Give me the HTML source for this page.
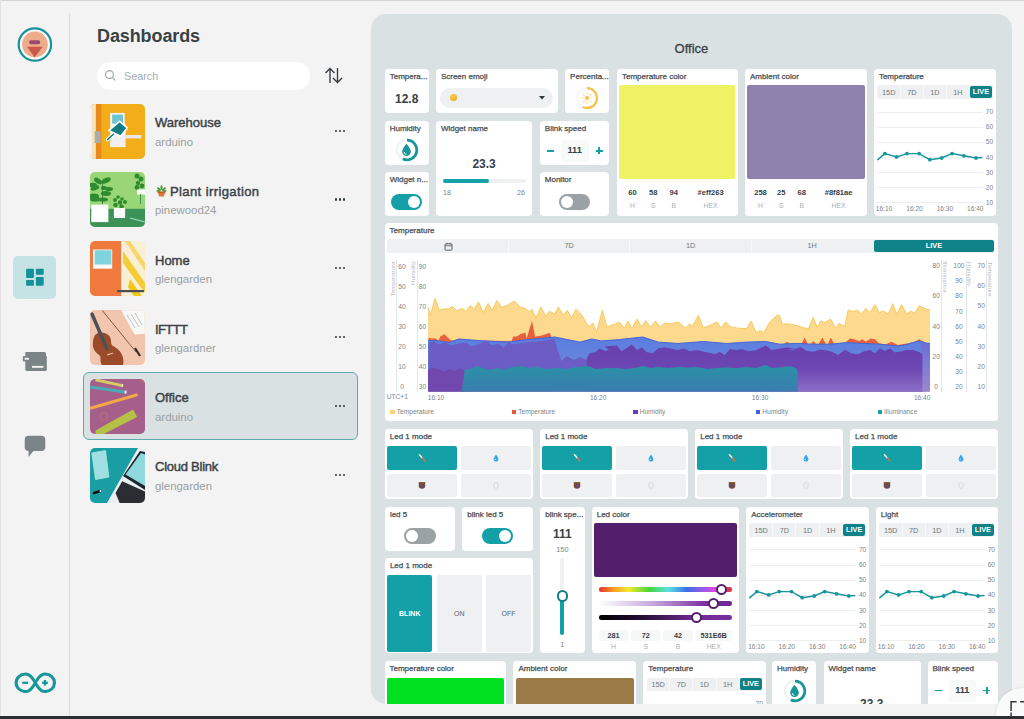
<!DOCTYPE html><html><head><meta charset="utf-8"><style>
*{margin:0;padding:0;box-sizing:border-box}
html,body{width:1024px;height:719px;overflow:hidden;background:#f3f3f3;font-family:"Liberation Sans",sans-serif;color:#374146}
.a{position:absolute}
.card{position:absolute;background:#fff;border-radius:4px;overflow:hidden}
.ttl{position:absolute;left:5px;top:4px;font-size:8px;color:#474d51;white-space:nowrap;-webkit-text-stroke:0.25px #474d51}
.tab{position:absolute;font-size:7.5px;color:#6b7679;text-align:center}
</style></head><body>
<div class="a" style="left:0;top:0;width:1024px;height:1px;background:#d6d6d6"></div>
<div class="a" style="left:0;top:0;width:1px;height:716px;background:#e2e2e2"></div>
<div class="a" style="left:69px;top:13px;width:1px;height:703px;background:#dcdcdc"></div>
<svg class="a" style="left:17px;top:27px" width="36" height="36" viewBox="17 27 36 36">
<circle cx="34.9" cy="44.5" r="16.2" fill="#fbfdfd" stroke="#17909a" stroke-width="2.2"/>
<circle cx="34.9" cy="44.5" r="12.9" fill="#eeac8a"/>
<rect x="29.1" y="40.2" width="11.1" height="4.1" rx="2" fill="#9a4a6e"/>
<path d="M27 46.8 L42.7 46.8 L34.7 57.5 Z" fill="#c95a4a"/>
</svg>
<div class="a" style="left:13.4px;top:256px;width:42.6px;height:43.2px;border-radius:5px;background:#c5e2e4"></div>
<svg class="a" style="left:0;top:250px" width="70" height="50" viewBox="0 250 70 50" fill="#12919a">
<rect x="26.1" y="268.8" width="7.8" height="9.2" rx="0.8"/><rect x="35.9" y="268.8" width="7.8" height="5.9" rx="0.8"/>
<rect x="26.1" y="280" width="7.8" height="5.8" rx="0.8"/><rect x="35.9" y="276.9" width="7.8" height="8.9" rx="0.8"/></svg>
<svg class="a" style="left:0;top:340px" width="70" height="40" viewBox="0 340 70 40">
<path d="M26.5 352 H44.5 A1.5 1.5 0 0 1 46 353.5 V356 H46.8 V369.5 A1.5 1.5 0 0 1 45.3 371 H26.8 A1.5 1.5 0 0 1 25.3 369.5 V352 Z" fill="#7b8588"/>
<rect x="22.8" y="356.1" width="6.6" height="5.3" rx="1" fill="#7b8588"/>
<rect x="24.7" y="357.8" width="4.2" height="1.9" fill="#f3f3f3"/>
<rect x="32" y="365.9" width="11.4" height="1.9" fill="#f3f3f3"/></svg>
<svg class="a" style="left:0;top:430px" width="70" height="32" viewBox="0 430 70 32">
<path d="M28.7 435.8 H41.3 A4 4 0 0 1 45.3 439.8 V447.1 A4 4 0 0 1 41.3 451.1 H33.4 L28.6 457 V451.1 A4 4 0 0 1 24.7 447.1 V439.8 A4 4 0 0 1 28.7 435.8 Z" fill="#7b8588"/></svg>
<svg class="a" style="left:13.7px;top:671.6px" width="42.6" height="21.6" viewBox="0 0 44 23" preserveAspectRatio="none">
<g fill="none" stroke="#17979b" stroke-width="3.2">
<path d="M12 2.2 C6.5 2.2 2.2 6.3 2.2 11.5 C2.2 16.7 6.5 20.8 12 20.8 C17.5 20.8 20 15 22 11.5 C24 8 26.5 2.2 32 2.2 C37.5 2.2 41.8 6.3 41.8 11.5 C41.8 16.7 37.5 20.8 32 20.8 C26.5 20.8 24 15 22 11.5 C20 8 17.5 2.2 12 2.2 Z"/>
</g>
<rect x="8.5" y="10.3" width="6" height="2.4" fill="#17979b"/>
<rect x="29" y="10.3" width="6" height="2.4" fill="#17979b"/><rect x="30.8" y="8.5" width="2.4" height="6" fill="#17979b"/>
</svg>
<div class="a" style="left:97px;top:26px;font-size:18px;font-weight:bold;color:#394145;letter-spacing:-0.1px">Dashboards</div>
<div class="a" style="left:97px;top:62.2px;width:212.5px;height:27.6px;border-radius:13.8px;background:#fff"></div>
<svg class="a" style="left:104px;top:69px" width="13" height="13" viewBox="0 0 13 13"><circle cx="5.5" cy="5.5" r="3.9" fill="none" stroke="#9aa3a6" stroke-width="1.1"/><path d="M8.4 8.4 L11.3 11.3" stroke="#9aa3a6" stroke-width="1.2"/></svg>
<div class="a" style="left:124px;top:70px;font-size:10.8px;color:#a6aeb1">Search</div>
<svg class="a" style="left:323px;top:66px" width="21" height="19" viewBox="0 0 21 19" fill="none" stroke="#333c40" stroke-width="1.35">
<path d="M7 17 V2.5 M2.5 7 L7 2.5 L11.5 7"/><path d="M14.5 2 V16.5 M10 12 L14.5 16.5 L19 12"/></svg>
<div class="a thumb0" style="left:90px;top:103.6px;width:55px;height:55px;border-radius:5px;overflow:hidden"><svg width="55" height="55" viewBox="0 0 55 55"><rect width="55" height="55" fill="#f2ad18"/>
<rect x="0" y="0" width="2" height="55" fill="#f3f3f3"/><rect x="1.8" y="0" width="4.2" height="55" fill="#f4e3b8"/><rect x="5.9" y="0" width="5.5" height="55" fill="#e98a1c"/>
<rect x="20.1" y="8.9" width="14.6" height="11.7" fill="#f2f4f4"/><rect x="22.2" y="10.6" width="10.8" height="9.2" fill="#6cc5d0"/>
<rect x="20.1" y="19.8" width="15.5" height="23.3" fill="#f0f0ee"/><rect x="34.7" y="31" width="16.7" height="3.4" fill="#e8e8e6"/>
<rect x="4.7" y="27.3" width="5.8" height="11.7" fill="#a9adad"/>
<path d="M17.6 35.6 L24 29.5" stroke="#fff" stroke-width="3.5" stroke-linecap="round"/>
<path d="M17.6 35.6 L24 29.5" stroke="#0f7d82" stroke-width="1.5" stroke-linecap="round"/>
<path d="M18.9 26.4 L29.7 17.3 L37.2 23.9 L30.6 32.3 Z" fill="#0f7d82" stroke="#fff" stroke-width="1.6" stroke-linejoin="round"/></svg></div>
<div class="a" style="left:155px;top:115.1px;font-size:13px;letter-spacing:0px;color:#3b4347;-webkit-text-stroke:0.45px #3b4347">Warehouse</div>
<div class="a" style="left:155px;top:135.6px;font-size:11.4px;color:#999fa2">arduino</div>
<div class="a" style="left:335px;top:129.5px;width:13px;height:3px"><i class="a" style="left:0.0px;top:0;width:2.2px;height:2.4px;border-radius:50%;background:#2f3a3f"></i><i class="a" style="left:4.1px;top:0;width:2.2px;height:2.4px;border-radius:50%;background:#2f3a3f"></i><i class="a" style="left:8.2px;top:0;width:2.2px;height:2.4px;border-radius:50%;background:#2f3a3f"></i></div>
<div class="a thumb1" style="left:90px;top:172.4px;width:55px;height:55px;border-radius:5px;overflow:hidden"><svg width="55" height="55" viewBox="0 0 55 55"><rect width="55" height="55" fill="#98d677"/><rect x="0" y="36.8" width="55" height="18.2" fill="#3d9257"/>
<g fill="#2e8b2e"><ellipse cx="8" cy="9" rx="4.5" ry="2.4" transform="rotate(35 8 9)"/><ellipse cx="16" cy="8.5" rx="5" ry="2.4" transform="rotate(-25 16 8.5)"/><ellipse cx="3" cy="13" rx="4" ry="2.2"/>
<ellipse cx="5" cy="16" rx="4.5" ry="2.2" transform="rotate(-20 5 16)"/><ellipse cx="14" cy="16" rx="3" ry="2"/><ellipse cx="19" cy="17" rx="4" ry="2"/>
<ellipse cx="16" cy="21.5" rx="5" ry="2.5"/><ellipse cx="4" cy="24" rx="5" ry="2.6"/><ellipse cx="5" cy="27" rx="5" ry="2.6"/><ellipse cx="13" cy="27.5" rx="5" ry="2"/>
<circle cx="25" cy="28" r="2"/><circle cx="28" cy="25" r="1.8"/><circle cx="32" cy="27" r="1.8"/><circle cx="30" cy="30.5" r="2.2"/><circle cx="35" cy="30" r="2"/><circle cx="25.5" cy="33" r="2.3"/><circle cx="31.5" cy="34.5" r="2.2"/>
<circle cx="47" cy="4" r="2.5"/><circle cx="51" cy="7" r="2.5"/><circle cx="48" cy="11" r="2.2"/><circle cx="52" cy="14" r="2.4"/><circle cx="47" cy="15.5" r="2.4"/></g>
<rect x="12" y="10" width="0.8" height="22" fill="#2e7a2e"/>
<rect x="1.3" y="32.6" width="17.1" height="17.5" fill="#fff"/><rect x="23.9" y="36" width="11.2" height="10" fill="#f8f8f8"/>
<rect x="47" y="17.5" width="8" height="5" fill="#fff"/><rect x="50" y="22" width="1" height="10" fill="#3d9257"/>
<path d="M40 46 L55 50" stroke="#9fe0d0" stroke-width="1.2"/></svg></div>
<svg class="a" style="left:155.5px;top:184.9px" width="11" height="12" viewBox="0 0 11 12"><g fill="#4a9a3a"><ellipse cx="3" cy="4" rx="2.4" ry="1.1" transform="rotate(40 3 4)"/><ellipse cx="8" cy="4" rx="2.4" ry="1.1" transform="rotate(-40 8 4)"/><ellipse cx="5.5" cy="2.6" rx="1.1" ry="2.3"/><ellipse cx="2.5" cy="6" rx="2.2" ry="1"/><ellipse cx="8.5" cy="6" rx="2.2" ry="1"/></g><path d="M2 7 H9 L8 11.5 H3 Z" fill="#e07a3a"/><rect x="1.6" y="6.6" width="7.8" height="1.6" rx="0.5" fill="#c8602a"/></svg>
<div class="a" style="left:170px;top:183.9px;font-size:13px;letter-spacing:0.4px;color:#3b4347;-webkit-text-stroke:0.45px #3b4347">Plant irrigation</div>
<div class="a" style="left:155px;top:204.4px;font-size:11.4px;color:#999fa2">pinewood24</div>
<div class="a" style="left:335px;top:198.3px;width:13px;height:3px"><i class="a" style="left:0.0px;top:0;width:2.2px;height:2.4px;border-radius:50%;background:#2f3a3f"></i><i class="a" style="left:4.1px;top:0;width:2.2px;height:2.4px;border-radius:50%;background:#2f3a3f"></i><i class="a" style="left:8.2px;top:0;width:2.2px;height:2.4px;border-radius:50%;background:#2f3a3f"></i></div>
<div class="a thumb2" style="left:90px;top:241.2px;width:55px;height:55px;border-radius:5px;overflow:hidden"><svg width="55" height="55" viewBox="0 0 55 55"><rect width="55" height="55" fill="#f8efd4"/><rect x="0" y="0" width="31.4" height="55" fill="#f07a3e"/>
<path d="M35 0 L40 0 L55 22 L55 30 Z" fill="#f5d050" opacity="0.8"/><path d="M33 10 L55 42 L55 52 L33 22 Z" fill="#f5c518" opacity="0.85"/><path d="M40 38 L52 55 L44 55 L38 46 Z" fill="#f5c518"/>
<rect x="31.4" y="0" width="1.5" height="55" fill="#f6f1e6"/>
<rect x="3" y="8.5" width="19.2" height="19.2" fill="#f8f8f6"/><rect x="4.7" y="9.3" width="16.7" height="14.2" fill="#7fd3dc"/>
<rect x="27.2" y="49" width="26.7" height="2.2" fill="#4a4f55"/></svg></div>
<div class="a" style="left:155px;top:252.7px;font-size:13px;letter-spacing:0px;color:#3b4347;-webkit-text-stroke:0.45px #3b4347">Home</div>
<div class="a" style="left:155px;top:273.2px;font-size:11.4px;color:#999fa2">glengarden</div>
<div class="a" style="left:335px;top:267.1px;width:13px;height:3px"><i class="a" style="left:0.0px;top:0;width:2.2px;height:2.4px;border-radius:50%;background:#2f3a3f"></i><i class="a" style="left:4.1px;top:0;width:2.2px;height:2.4px;border-radius:50%;background:#2f3a3f"></i><i class="a" style="left:8.2px;top:0;width:2.2px;height:2.4px;border-radius:50%;background:#2f3a3f"></i></div>
<div class="a thumb3" style="left:90px;top:310.0px;width:55px;height:55px;border-radius:5px;overflow:hidden"><svg width="55" height="55" viewBox="0 0 55 55"><rect width="55" height="55" fill="#f2c6ae"/>
<path d="M31.4 0.3 L54.8 0.3 L54.8 23.7 L44.7 24.5 L33 3.7 Z" fill="#f8f8f6"/>
<g stroke="#9aa0a0" stroke-width="0.6"><path d="M37 5 L45 18 M41 4 L49 17 M45 3 L52 15"/></g>
<path d="M5 25 C9 21 17 22 20 27 C22 31 20 34 23 36 C27 38 32 42 33 48 C34 52 33 55 33 55 L12 55 C9 51 12 47 9 45 C5 42 2 38 3 32 C3 29 4 27 5 25 Z" fill="#9b4a2a"/>
<path d="M2 4 L17 39" stroke="#4a5258" stroke-width="3.5" stroke-linecap="round"/>
<path d="M12.2 0.3 L46 42" stroke="#7a4a35" stroke-width="0.9"/><path d="M45 38 L50 46" stroke="#3a2a20" stroke-width="2.2"/>
<path d="M17 45 L23 43" stroke="#e9c9a0" stroke-width="1.2"/></svg></div>
<div class="a" style="left:155px;top:321.5px;font-size:13px;letter-spacing:-0.6px;color:#3b4347;-webkit-text-stroke:0.45px #3b4347">IFTTT</div>
<div class="a" style="left:155px;top:342.0px;font-size:11.4px;color:#999fa2">glengardner</div>
<div class="a" style="left:335px;top:335.9px;width:13px;height:3px"><i class="a" style="left:0.0px;top:0;width:2.2px;height:2.4px;border-radius:50%;background:#2f3a3f"></i><i class="a" style="left:4.1px;top:0;width:2.2px;height:2.4px;border-radius:50%;background:#2f3a3f"></i><i class="a" style="left:8.2px;top:0;width:2.2px;height:2.4px;border-radius:50%;background:#2f3a3f"></i></div>
<div class="a" style="left:82.5px;top:371.7px;width:275.5px;height:68px;border-radius:6px;background:#dae1e3;border:1.5px solid #5ea9ab"></div>
<div class="a thumb4" style="left:90px;top:378.8px;width:55px;height:55px;border-radius:5px;overflow:hidden"><svg width="55" height="55" viewBox="0 0 55 55"><rect width="55" height="55" fill="#a65e8a"/>
<path d="M5.5 0.8 L31.4 6.4" stroke="#d6cc66" stroke-width="3"/><path d="M31.4 6.4 L33 6.8" stroke="#f6f0d0" stroke-width="3"/>
<path d="M0 8 L34.7 13" stroke="#4aaab5" stroke-width="3"/><path d="M34.7 13 L36.5 13.2" stroke="#dff" stroke-width="3"/>
<path d="M1.3 29 L46.4 16" stroke="#f0a848" stroke-width="3" stroke-linecap="round"/>
<path d="M5.5 51.5 L43.1 30.6 L47.2 38.1 L13.9 55 L5.5 55 Z" fill="#b4c046"/>
<circle cx="13.9" cy="37.3" r="4" fill="none" stroke="#c58a5e" stroke-width="0.8" opacity="0.6"/>
<path d="M50 2 L55 5 L55 0 Z" fill="#c07a6a" opacity="0.6"/></svg></div>
<div class="a" style="left:155px;top:390.3px;font-size:13px;letter-spacing:0px;color:#3b4347;-webkit-text-stroke:0.45px #3b4347">Office</div>
<div class="a" style="left:155px;top:410.8px;font-size:11.4px;color:#999fa2">arduino</div>
<div class="a" style="left:335px;top:404.7px;width:13px;height:3px"><i class="a" style="left:0.0px;top:0;width:2.2px;height:2.4px;border-radius:50%;background:#2f3a3f"></i><i class="a" style="left:4.1px;top:0;width:2.2px;height:2.4px;border-radius:50%;background:#2f3a3f"></i><i class="a" style="left:8.2px;top:0;width:2.2px;height:2.4px;border-radius:50%;background:#2f3a3f"></i></div>
<div class="a thumb5" style="left:90px;top:447.6px;width:55px;height:55px;border-radius:5px;overflow:hidden"><svg width="55" height="55" viewBox="0 0 55 55"><rect width="55" height="55" fill="#e9eef0"/><path d="M0 0 L48 0 L17 55 L0 55 Z" fill="#1a9ea3"/>
<path d="M1.8 4.9 L15.5 2.4 L18.9 29.1 L5.5 31.6 Z" fill="#9fdfe2" stroke="#c8f0f0" stroke-width="0.6"/>
<path d="M33 28 L50 3 L55 4 L55 42 Z" fill="#1b2630"/><path d="M35.5 26.5 L51 5 L55 6.5 L55 38 Z" fill="#8fd8dc"/>
<path d="M25.5 45 L32.2 33.3 L55 43.6 L55 55 L29.7 55 Z" fill="#2a2e33"/>
<path d="M4 45 L10.5 43" stroke="#111" stroke-width="2.6" stroke-linecap="round"/><circle cx="10.5" cy="43" r="1" fill="#fff"/></svg></div>
<div class="a" style="left:155px;top:459.1px;font-size:13px;letter-spacing:-0.25px;color:#3b4347;-webkit-text-stroke:0.45px #3b4347">Cloud Blink</div>
<div class="a" style="left:155px;top:479.6px;font-size:11.4px;color:#999fa2">glengarden</div>
<div class="a" style="left:335px;top:473.5px;width:13px;height:3px"><i class="a" style="left:0.0px;top:0;width:2.2px;height:2.4px;border-radius:50%;background:#2f3a3f"></i><i class="a" style="left:4.1px;top:0;width:2.2px;height:2.4px;border-radius:50%;background:#2f3a3f"></i><i class="a" style="left:8.2px;top:0;width:2.2px;height:2.4px;border-radius:50%;background:#2f3a3f"></i></div>
<div class="a" id="panel" style="left:371px;top:14px;width:640.5px;height:689.5px;border-radius:15px;background:#dae1e3;overflow:hidden"><div class="a" style="left:290.4px;top:27.2px;width:60px;height:16px;line-height:16px;text-align:center;white-space:nowrap;font-size:13px;color:#3c4347;-webkit-text-stroke:0.3px #3c4347">Office</div>
<div class="card" style="left:13.7px;top:55.2px;width:44.1px;height:43.6px;border-radius:4px"><div class="ttl" style="left:5px;top:2.9px">Tempera...</div><div class="a" style="left:0.0px;top:22.5px;width:44px;height:14px;line-height:14px;text-align:center;white-space:nowrap;font-size:12px;font-weight:bold;color:#374146">12.8</div></div>
<div class="card" style="left:64.9px;top:55.2px;width:122.4px;height:43.6px;border-radius:4px"><div class="ttl" style="left:5px;top:2.9px">Screen emoji</div><div class="a" style="left:4.6px;top:18.6px;width:112.9px;height:20.3px;background:#eef0f1;border-radius:10px"><div class="a" style="left:9.5px;top:6.2px;width:7.4px;height:7.4px;background:radial-gradient(circle at 40% 35%,#f8d04a,#e8a020);border-radius:50%"></div><svg class="a" style="left:98.4px;top:8.6px" width="6" height="4"><path d="M0 0 H6 L3 3.6 Z" fill="#2f3a3e"/></svg></div></div>
<div class="card" style="left:194.1px;top:55.2px;width:44.1px;height:43.6px;border-radius:4px"><div class="ttl" style="left:5px;top:2.9px">Percenta...</div><svg class="a" style="left:10px;top:16.4px" width="24" height="24" viewBox="0 0 24 24">
<circle cx="12" cy="12" r="9.9" fill="none" stroke="#f3f4f5" stroke-width="1.6"/>
<path d="M12 2.1 A9.9 9.9 0 1 1 7.82 20.97" fill="none" stroke="#f5c244" stroke-width="2.3"/>
<circle cx="12" cy="12" r="2" fill="#f6bd48"/>
<g stroke="#f9dc9a" stroke-width="1.1" stroke-linecap="round"><path d="M12 6.6 V8.3 M12 15.7 V17.4 M6.6 12 H8.3 M15.7 12 H17.4 M8.2 8.2 L9.3 9.3 M14.7 14.7 L15.8 15.8 M8.2 15.8 L9.3 14.7 M14.7 9.3 L15.8 8.2"/></g></svg></div>
<div class="card" style="left:246.0px;top:55.0px;width:120.5px;height:146.9px;border-radius:4px"><div class="ttl" style="left:5px;top:2.9px">Temperature color</div><div class="a" style="left:2.2px;top:16.2px;width:116.1px;height:94.3px;background:#eff263;border-radius:2px"></div><div class="a" style="left:-4.5px;top:118.6px;width:40px;height:10px;line-height:10px;text-align:center;white-space:nowrap;font-size:7.6px;font-weight:bold;color:#374146">60</div><div class="a" style="left:0.5px;top:131.5px;width:30px;height:10px;line-height:10px;text-align:center;white-space:nowrap;font-size:6.8px;color:#a8b0b3">H</div><div class="a" style="left:16.2px;top:118.6px;width:40px;height:10px;line-height:10px;text-align:center;white-space:nowrap;font-size:7.6px;font-weight:bold;color:#374146">58</div><div class="a" style="left:21.2px;top:131.5px;width:30px;height:10px;line-height:10px;text-align:center;white-space:nowrap;font-size:6.8px;color:#a8b0b3">S</div><div class="a" style="left:36.8px;top:118.6px;width:40px;height:10px;line-height:10px;text-align:center;white-space:nowrap;font-size:7.6px;font-weight:bold;color:#374146">94</div><div class="a" style="left:41.8px;top:131.5px;width:30px;height:10px;line-height:10px;text-align:center;white-space:nowrap;font-size:6.8px;color:#a8b0b3">B</div><div class="a" style="left:73.6px;top:118.6px;width:40px;height:10px;line-height:10px;text-align:center;white-space:nowrap;font-size:7.6px;font-weight:bold;color:#374146">#eff263</div><div class="a" style="left:78.6px;top:131.5px;width:30px;height:10px;line-height:10px;text-align:center;white-space:nowrap;font-size:6.8px;color:#a8b0b3">HEX</div></div>
<div class="card" style="left:374.0px;top:55.0px;width:121.9px;height:146.9px;border-radius:4px"><div class="ttl" style="left:5px;top:2.9px">Ambient color</div><div class="a" style="left:2.2px;top:16.2px;width:117.5px;height:94.3px;background:#8f81ae;border-radius:2px"></div><div class="a" style="left:-4.5px;top:118.6px;width:40px;height:10px;line-height:10px;text-align:center;white-space:nowrap;font-size:7.6px;font-weight:bold;color:#374146">258</div><div class="a" style="left:0.5px;top:131.5px;width:30px;height:10px;line-height:10px;text-align:center;white-space:nowrap;font-size:6.8px;color:#a8b0b3">H</div><div class="a" style="left:16.2px;top:118.6px;width:40px;height:10px;line-height:10px;text-align:center;white-space:nowrap;font-size:7.6px;font-weight:bold;color:#374146">25</div><div class="a" style="left:21.2px;top:131.5px;width:30px;height:10px;line-height:10px;text-align:center;white-space:nowrap;font-size:6.8px;color:#a8b0b3">S</div><div class="a" style="left:36.8px;top:118.6px;width:40px;height:10px;line-height:10px;text-align:center;white-space:nowrap;font-size:7.6px;font-weight:bold;color:#374146">68</div><div class="a" style="left:41.8px;top:131.5px;width:30px;height:10px;line-height:10px;text-align:center;white-space:nowrap;font-size:6.8px;color:#a8b0b3">B</div><div class="a" style="left:73.6px;top:118.6px;width:40px;height:10px;line-height:10px;text-align:center;white-space:nowrap;font-size:7.6px;font-weight:bold;color:#374146">#8f81ae</div><div class="a" style="left:78.6px;top:131.5px;width:30px;height:10px;line-height:10px;text-align:center;white-space:nowrap;font-size:6.8px;color:#a8b0b3">HEX</div></div>
<div class="card" style="left:502.9px;top:54.8px;width:122.0px;height:147.1px;border-radius:4px"><div class="ttl" style="left:5px;top:2.9px">Temperature</div><div class="a" style="left:3.3px;top:16.6px;width:115.4px;height:13.3px;background:#eef0f1;border-radius:2px"></div><div class="a" style="left:3.3px;top:18.0px;width:23.080000000000002px;height:12.6px;line-height:12.6px;text-align:center;white-space:nowrap;font-size:7.3px;color:#6e797d">15D</div><div class="a" style="left:26.4px;top:18.0px;width:23.080000000000002px;height:12.6px;line-height:12.6px;text-align:center;white-space:nowrap;font-size:7.3px;color:#6e797d">7D</div><div class="a" style="left:25.9px;top:16.6px;width:1.0px;height:13.3px;background:#f8f9f9"></div><div class="a" style="left:49.5px;top:18.0px;width:23.080000000000002px;height:12.6px;line-height:12.6px;text-align:center;white-space:nowrap;font-size:7.3px;color:#6e797d">1D</div><div class="a" style="left:49.0px;top:16.6px;width:1.0px;height:13.3px;background:#f8f9f9"></div><div class="a" style="left:72.5px;top:18.0px;width:23.080000000000002px;height:12.6px;line-height:12.6px;text-align:center;white-space:nowrap;font-size:7.3px;color:#6e797d">1H</div><div class="a" style="left:72.0px;top:16.6px;width:1.0px;height:13.3px;background:#f8f9f9"></div><div class="a" style="left:95.9px;top:17.3px;width:22.4px;height:11.8px;background:#0e8286;border-radius:2px"><div class="a" style="left:0.0px;top:0.0px;width:22.4px;height:11.6px;line-height:11.6px;text-align:center;white-space:nowrap;font-size:7.3px;font-weight:bold;color:#fff">LIVE</div></div><div class="a" style="left:3.3px;top:42.8px;width:106.0px;height:0.8px;background:#eceeef"></div><div class="a" style="left:108.5px;top:38.3px;width:14px;height:9px;line-height:9px;text-align:center;white-space:nowrap;font-size:6.6px;color:#7b8589">70</div><div class="a" style="left:3.3px;top:57.9px;width:106.0px;height:0.8px;background:#eceeef"></div><div class="a" style="left:108.5px;top:53.4px;width:14px;height:9px;line-height:9px;text-align:center;white-space:nowrap;font-size:6.6px;color:#7b8589">60</div><div class="a" style="left:3.3px;top:73.1px;width:106.0px;height:0.8px;background:#eceeef"></div><div class="a" style="left:108.5px;top:68.6px;width:14px;height:9px;line-height:9px;text-align:center;white-space:nowrap;font-size:6.6px;color:#7b8589">50</div><div class="a" style="left:3.3px;top:88.2px;width:106.0px;height:0.8px;background:#eceeef"></div><div class="a" style="left:108.5px;top:83.8px;width:14px;height:9px;line-height:9px;text-align:center;white-space:nowrap;font-size:6.6px;color:#7b8589">40</div><div class="a" style="left:3.3px;top:103.4px;width:106.0px;height:0.8px;background:#eceeef"></div><div class="a" style="left:108.5px;top:98.9px;width:14px;height:9px;line-height:9px;text-align:center;white-space:nowrap;font-size:6.6px;color:#7b8589">30</div><div class="a" style="left:3.3px;top:118.5px;width:106.0px;height:0.8px;background:#eceeef"></div><div class="a" style="left:108.5px;top:114.0px;width:14px;height:9px;line-height:9px;text-align:center;white-space:nowrap;font-size:6.6px;color:#7b8589">20</div><div class="a" style="left:3.3px;top:133.7px;width:106.0px;height:0.8px;background:#eceeef"></div><div class="a" style="left:108.5px;top:129.2px;width:14px;height:9px;line-height:9px;text-align:center;white-space:nowrap;font-size:6.6px;color:#7b8589">10</div><div class="a" style="left:-1.8px;top:135.7px;width:24px;height:9px;line-height:9px;text-align:center;white-space:nowrap;font-size:6.6px;color:#7b8589">16:10</div><div class="a" style="left:28.6px;top:135.7px;width:24px;height:9px;line-height:9px;text-align:center;white-space:nowrap;font-size:6.6px;color:#7b8589">16:20</div><div class="a" style="left:59.0px;top:135.7px;width:24px;height:9px;line-height:9px;text-align:center;white-space:nowrap;font-size:6.6px;color:#7b8589">16:30</div><div class="a" style="left:89.4px;top:135.7px;width:24px;height:9px;line-height:9px;text-align:center;white-space:nowrap;font-size:6.6px;color:#7b8589">16:40</div><svg class="a" style="left:0;top:0" width="122.0" height="147.1"><path d="M3.3 91.1 L10.9 84.6 L22.6 87.9 L33.0 84.6 L45.1 84.6 L55.8 90.7 L67.7 89.0 L78.1 84.6 L89.9 86.8 L102.0 89.0 L108.5 88.5" fill="none" stroke="#17979b" stroke-width="1.4"/><g fill="#17979b"><circle cx="10.9" cy="84.6" r="1.9"/><circle cx="22.6" cy="87.9" r="1.9"/><circle cx="33.0" cy="84.6" r="1.9"/><circle cx="45.1" cy="84.6" r="1.9"/><circle cx="55.8" cy="90.7" r="1.9"/><circle cx="67.7" cy="89.0" r="1.9"/><circle cx="78.1" cy="84.6" r="1.9"/><circle cx="89.9" cy="86.8" r="1.9"/><circle cx="102.0" cy="89.0" r="1.9"/></g></svg></div>
<div class="card" style="left:13.7px;top:107.4px;width:44.1px;height:43.6px;border-radius:4px"><div class="ttl" style="left:5px;top:2.9px">Humidity</div><svg class="a" style="left:10.5px;top:16.5px" width="24" height="24" viewBox="0 0 24 24">
<circle cx="12" cy="12" r="10.2" fill="none" stroke="#f1f2f2" stroke-width="2"/>
<path d="M12 2.2 A9.8 9.8 0 1 1 7.86 20.88" fill="none" stroke="#17979b" stroke-width="2.8"/>
<path d="M11.5 5.8 C11.5 5.8 7.2 10.8 7.2 13.6 A4.3 4.3 0 0 0 15.8 13.6 C15.8 10.8 11.5 5.8 11.5 5.8 Z" fill="#17979b"/>
<path d="M9.2 14 A2.3 2.3 0 0 0 11.5 16.3" fill="none" stroke="#fff" stroke-width="0.9"/></svg></div>
<div class="card" style="left:64.9px;top:106.8px;width:96.4px;height:95.2px;border-radius:4px"><div class="ttl" style="left:5px;top:2.9px">Widget name</div><div class="a" style="left:18.2px;top:36.0px;width:60px;height:14px;line-height:14px;text-align:center;white-space:nowrap;font-size:12px;font-weight:bold;color:#374146">23.3</div><div class="a" style="left:7.3px;top:58.2px;width:82.5px;height:4.4px;background:#eef0f1;border-radius:2.2px"><div class="a" style="left:0.0px;top:0.0px;width:45.7px;height:4.4px;background:#13a0a6;border-radius:2.2px"></div></div><div class="a" style="left:7.0px;top:67.6px;white-space:nowrap;font-size:7.2px;color:#7b8589">18</div><div class="a" style="left:81.0px;top:67.6px;white-space:nowrap;font-size:7.2px;color:#7b8589">26</div></div>
<div class="card" style="left:168.8px;top:107.4px;width:69.4px;height:43.6px;border-radius:4px"><div class="ttl" style="left:5px;top:2.9px">Blink speed</div><div class="a" style="left:21.3px;top:18.6px;width:27.6px;height:21.6px;background:#f8f9f9;border-radius:2px"></div><div class="a" style="left:7.2px;top:28.6px;width:7.0px;height:1.6px;background:#13a0a6"></div><div class="a" style="left:22.8px;top:23.0px;width:24px;height:12px;line-height:12px;text-align:center;white-space:nowrap;font-size:9.2px;font-weight:bold;color:#374146">111</div><div class="a" style="left:55.8px;top:28.6px;width:7.0px;height:1.6px;background:#13a0a6"></div><div class="a" style="left:58.5px;top:25.9px;width:1.6px;height:7.0px;background:#13a0a6"></div></div>
<div class="card" style="left:13.7px;top:158.3px;width:44.1px;height:43.9px;border-radius:4px"><div class="ttl" style="left:5px;top:2.9px">Widget n...</div><div class="a" style="left:6.2px;top:21.3px;width:31.6px;height:16.0px;background:#13a0a6;border-radius:8px"><div class="a" style="left:17.6px;top:2.0px;width:12.0px;height:12.0px;background:#fff;border-radius:50%"></div></div></div>
<div class="card" style="left:168.8px;top:158.3px;width:69.4px;height:43.9px;border-radius:4px"><div class="ttl" style="left:5px;top:2.9px">Monitor</div><div class="a" style="left:18.9px;top:21.3px;width:31.6px;height:16.0px;background:#9aa2a5;border-radius:8px"><div class="a" style="left:2.0px;top:2.0px;width:12.0px;height:12.0px;background:#fff;border-radius:50%"></div></div></div>
<div class="card" style="left:13.6px;top:208.8px;width:613.5px;height:198.5px;border-radius:4px"><div class="ttl" style="left:5px;top:2.9px">Temperature</div><div class="a" style="left:2.4px;top:16.7px;width:607.4px;height:13.6px;background:#eef0f1;border-radius:2px"></div><div class="a" style="left:123.4px;top:16.7px;width:1.0px;height:13.6px;background:#f8f9f9"></div><div class="a" style="left:244.9px;top:16.7px;width:1.0px;height:13.6px;background:#f8f9f9"></div><div class="a" style="left:366.3px;top:16.7px;width:1.0px;height:13.6px;background:#f8f9f9"></div><div class="a" style="left:59.6px;top:19.3px;width:9px;height:9px;line-height:9px;text-align:center;white-space:nowrap;font-size:0"><svg width="9" height="9" viewBox="0 0 9 9"><rect x="1" y="1.8" width="7" height="6.4" rx="0.8" fill="none" stroke="#4b555a" stroke-width="0.9"/><path d="M1 3.8 H8" stroke="#4b555a" stroke-width="0.8"/><path d="M3 0.8 V2.4 M6 0.8 V2.4" stroke="#4b555a" stroke-width="0.8"/></svg></div><div class="a" style="left:169.6px;top:17.5px;width:30px;height:12px;line-height:12px;text-align:center;white-space:nowrap;font-size:7.3px;color:#6e797d">7D</div><div class="a" style="left:291.1px;top:17.5px;width:30px;height:12px;line-height:12px;text-align:center;white-space:nowrap;font-size:7.3px;color:#6e797d">1D</div><div class="a" style="left:412.6px;top:17.5px;width:30px;height:12px;line-height:12px;text-align:center;white-space:nowrap;font-size:7.3px;color:#6e797d">1H</div><div class="a" style="left:489.0px;top:17.6px;width:120.7px;height:11.5px;background:#0e8286;border-radius:2px"><div class="a" style="left:40.3px;top:0.0px;width:40px;height:11.5px;line-height:11.5px;text-align:center;white-space:nowrap;font-size:7.3px;font-weight:bold;color:#fff">LIVE</div></div><div class="a" style="left:-12.1px;top:51.8px;width:40px;height:8px;line-height:8px;text-align:center;white-space:nowrap;font-size:6.2px;color:#b3babd;transform:rotate(-90deg)">Temperature</div><div class="a" style="left:11.8px;top:37.2px;width:0.8px;height:131.6px;background:#e3e6e7"></div><div class="a" style="left:11.4px;top:38.9px;width:12px;height:9px;line-height:9px;text-align:center;white-space:nowrap;font-size:6.6px;color:#7b8589">60</div><div class="a" style="left:11.4px;top:58.9px;width:12px;height:9px;line-height:9px;text-align:center;white-space:nowrap;font-size:6.6px;color:#7b8589">50</div><div class="a" style="left:11.4px;top:79.0px;width:12px;height:9px;line-height:9px;text-align:center;white-space:nowrap;font-size:6.6px;color:#7b8589">40</div><div class="a" style="left:11.4px;top:99.1px;width:12px;height:9px;line-height:9px;text-align:center;white-space:nowrap;font-size:6.6px;color:#7b8589">30</div><div class="a" style="left:11.4px;top:119.1px;width:12px;height:9px;line-height:9px;text-align:center;white-space:nowrap;font-size:6.6px;color:#7b8589">20</div><div class="a" style="left:11.4px;top:139.1px;width:12px;height:9px;line-height:9px;text-align:center;white-space:nowrap;font-size:6.6px;color:#7b8589">10</div><div class="a" style="left:11.4px;top:159.2px;width:12px;height:9px;line-height:9px;text-align:center;white-space:nowrap;font-size:6.6px;color:#7b8589">0</div><div class="a" style="left:13.5px;top:46.2px;width:30px;height:8px;line-height:8px;text-align:center;white-space:nowrap;font-size:6.2px;color:#b3babd;transform:rotate(-90deg)">Humidity</div><div class="a" style="left:32.6px;top:37.2px;width:0.8px;height:131.6px;background:#e3e6e7"></div><div class="a" style="left:31.9px;top:38.9px;width:12px;height:9px;line-height:9px;text-align:center;white-space:nowrap;font-size:6.6px;color:#7b8589">90</div><div class="a" style="left:31.9px;top:58.9px;width:12px;height:9px;line-height:9px;text-align:center;white-space:nowrap;font-size:6.6px;color:#7b8589">80</div><div class="a" style="left:31.9px;top:79.0px;width:12px;height:9px;line-height:9px;text-align:center;white-space:nowrap;font-size:6.6px;color:#7b8589">70</div><div class="a" style="left:31.9px;top:99.1px;width:12px;height:9px;line-height:9px;text-align:center;white-space:nowrap;font-size:6.6px;color:#7b8589">60</div><div class="a" style="left:31.9px;top:119.1px;width:12px;height:9px;line-height:9px;text-align:center;white-space:nowrap;font-size:6.6px;color:#7b8589">50</div><div class="a" style="left:31.9px;top:139.1px;width:12px;height:9px;line-height:9px;text-align:center;white-space:nowrap;font-size:6.6px;color:#7b8589">40</div><div class="a" style="left:31.9px;top:159.2px;width:12px;height:9px;line-height:9px;text-align:center;white-space:nowrap;font-size:6.6px;color:#7b8589">30</div><div class="a" style="left:540.4px;top:50.2px;width:40px;height:8px;line-height:8px;text-align:center;white-space:nowrap;font-size:6.2px;color:#b3babd;transform:rotate(90deg)">Illuminance</div><div class="a" style="left:556.5px;top:37.2px;width:0.8px;height:131.6px;background:#e3e6e7"></div><div class="a" style="left:545.6px;top:38.3px;width:12px;height:9px;line-height:9px;text-align:center;white-space:nowrap;font-size:6.6px;color:#7b8589">80</div><div class="a" style="left:545.6px;top:68.6px;width:12px;height:9px;line-height:9px;text-align:center;white-space:nowrap;font-size:6.6px;color:#7b8589">60</div><div class="a" style="left:545.6px;top:98.9px;width:12px;height:9px;line-height:9px;text-align:center;white-space:nowrap;font-size:6.6px;color:#7b8589">40</div><div class="a" style="left:545.6px;top:129.2px;width:12px;height:9px;line-height:9px;text-align:center;white-space:nowrap;font-size:6.6px;color:#7b8589">20</div><div class="a" style="left:545.6px;top:159.5px;width:12px;height:9px;line-height:9px;text-align:center;white-space:nowrap;font-size:6.6px;color:#7b8589">0</div><div class="a" style="left:569.9px;top:46.9px;width:30px;height:8px;line-height:8px;text-align:center;white-space:nowrap;font-size:6.2px;color:#b3babd;transform:rotate(90deg)">Humidity</div><div class="a" style="left:581.0px;top:37.2px;width:0.8px;height:131.6px;background:#e3e6e7"></div><div class="a" style="left:567.4px;top:38.3px;width:14px;height:9px;line-height:9px;text-align:center;white-space:nowrap;font-size:6.6px;color:#7b8589">100</div><div class="a" style="left:567.4px;top:53.5px;width:14px;height:9px;line-height:9px;text-align:center;white-space:nowrap;font-size:6.6px;color:#7b8589">90</div><div class="a" style="left:567.4px;top:68.6px;width:14px;height:9px;line-height:9px;text-align:center;white-space:nowrap;font-size:6.6px;color:#7b8589">80</div><div class="a" style="left:567.4px;top:83.8px;width:14px;height:9px;line-height:9px;text-align:center;white-space:nowrap;font-size:6.6px;color:#7b8589">70</div><div class="a" style="left:567.4px;top:98.9px;width:14px;height:9px;line-height:9px;text-align:center;white-space:nowrap;font-size:6.6px;color:#7b8589">60</div><div class="a" style="left:567.4px;top:114.1px;width:14px;height:9px;line-height:9px;text-align:center;white-space:nowrap;font-size:6.6px;color:#7b8589">50</div><div class="a" style="left:567.4px;top:129.3px;width:14px;height:9px;line-height:9px;text-align:center;white-space:nowrap;font-size:6.6px;color:#7b8589">40</div><div class="a" style="left:567.4px;top:144.4px;width:14px;height:9px;line-height:9px;text-align:center;white-space:nowrap;font-size:6.6px;color:#7b8589">30</div><div class="a" style="left:567.4px;top:159.6px;width:14px;height:9px;line-height:9px;text-align:center;white-space:nowrap;font-size:6.6px;color:#7b8589">20</div><div class="a" style="left:585.4px;top:51.8px;width:40px;height:8px;line-height:8px;text-align:center;white-space:nowrap;font-size:6.2px;color:#b3babd;transform:rotate(90deg)">Temperature</div><div class="a" style="left:601.2px;top:37.2px;width:0.8px;height:131.6px;background:#e3e6e7"></div><div class="a" style="left:590.7px;top:38.3px;width:12px;height:9px;line-height:9px;text-align:center;white-space:nowrap;font-size:6.6px;color:#7b8589">70</div><div class="a" style="left:590.7px;top:58.5px;width:12px;height:9px;line-height:9px;text-align:center;white-space:nowrap;font-size:6.6px;color:#7b8589">60</div><div class="a" style="left:590.7px;top:78.7px;width:12px;height:9px;line-height:9px;text-align:center;white-space:nowrap;font-size:6.6px;color:#7b8589">50</div><div class="a" style="left:590.7px;top:98.9px;width:12px;height:9px;line-height:9px;text-align:center;white-space:nowrap;font-size:6.6px;color:#7b8589">40</div><div class="a" style="left:590.7px;top:119.1px;width:12px;height:9px;line-height:9px;text-align:center;white-space:nowrap;font-size:6.6px;color:#7b8589">30</div><div class="a" style="left:590.7px;top:139.3px;width:12px;height:9px;line-height:9px;text-align:center;white-space:nowrap;font-size:6.6px;color:#7b8589">20</div><div class="a" style="left:590.7px;top:159.5px;width:12px;height:9px;line-height:9px;text-align:center;white-space:nowrap;font-size:6.6px;color:#7b8589">10</div><div class="a" style="left:2.2px;top:170.2px;white-space:nowrap;font-size:6.6px;color:#7b8589">UTC+1</div><div class="a" style="left:39.4px;top:170.7px;width:24px;height:9px;line-height:9px;text-align:center;white-space:nowrap;font-size:6.6px;color:#7b8589">16:10</div><div class="a" style="left:201.6px;top:170.7px;width:24px;height:9px;line-height:9px;text-align:center;white-space:nowrap;font-size:6.6px;color:#7b8589">16:20</div><div class="a" style="left:363.5px;top:170.7px;width:24px;height:9px;line-height:9px;text-align:center;white-space:nowrap;font-size:6.6px;color:#7b8589">16:30</div><div class="a" style="left:525.6px;top:170.7px;width:24px;height:9px;line-height:9px;text-align:center;white-space:nowrap;font-size:6.6px;color:#7b8589">16:40</div><div class="a" style="left:5.8px;top:187.2px;width:4.4px;height:4.4px;background:#fbd27a"></div><div class="a" style="left:12.2px;top:185.1px;white-space:nowrap;font-size:6.6px;color:#7b8589">Temperature</div><div class="a" style="left:127.2px;top:187.2px;width:4.4px;height:4.4px;background:#e8583a"></div><div class="a" style="left:133.6px;top:185.1px;white-space:nowrap;font-size:6.6px;color:#7b8589">Temperature</div><div class="a" style="left:248.7px;top:187.2px;width:4.4px;height:4.4px;background:#6a3fb5"></div><div class="a" style="left:255.1px;top:185.1px;white-space:nowrap;font-size:6.6px;color:#7b8589">Humidity</div><div class="a" style="left:371.3px;top:187.2px;width:4.4px;height:4.4px;background:#3d63db"></div><div class="a" style="left:377.7px;top:185.1px;white-space:nowrap;font-size:6.6px;color:#7b8589">Humidity</div><div class="a" style="left:493.0px;top:187.2px;width:4.4px;height:4.4px;background:#1f9ba5"></div><div class="a" style="left:499.4px;top:185.1px;white-space:nowrap;font-size:6.6px;color:#7b8589">Illuminance</div><svg class="a" style="left:43.6px;top:27.2px" width="502.0" height="141.6" viewBox="428.2 250 502.0 141.6"><defs>
<linearGradient id="gp" x1="0" y1="0" x2="0" y2="1"><stop offset="0" stop-color="#6840ae"/><stop offset="0.5" stop-color="#6c46b2"/><stop offset="1" stop-color="#8c6ec6"/></linearGradient>
<linearGradient id="gl" x1="0" y1="0" x2="0" y2="1"><stop offset="0" stop-color="#6a6fd6"/><stop offset="1" stop-color="#9a88d0"/></linearGradient>
<linearGradient id="gt" x1="0" y1="0" x2="0" y2="1"><stop offset="0" stop-color="#2a92a6"/><stop offset="1" stop-color="#3a7cb0"/></linearGradient>
<linearGradient id="gb" x1="0" y1="0" x2="0" y2="1"><stop offset="0" stop-color="#5a7ee0"/><stop offset="1" stop-color="#7a8ad8"/></linearGradient>
</defs><path d="M428.2 391.6 L428.2 307.3 L430.7 315.2 L435.2 298.6 L439.5 310.3 L443.4 308.9 L449.3 308.9 L452.2 306.4 L457.1 310.9 L462.0 308.3 L465.9 311.2 L470.8 305.4 L474.7 309.3 L478.6 301.9 L483.5 312.8 L488.4 303.4 L492.3 310.3 L497.1 300.5 L502.0 307.3 L506.9 305.4 L514.7 301.1 L520.6 307.3 L525.5 308.3 L530.4 312.2 L532.3 309.3 L536.2 318.1 L541.1 307.0 L546.0 316.1 L549.9 311.2 L554.8 314.2 L558.7 307.0 L563.6 315.2 L567.5 310.3 L571.4 318.1 L576.2 309.3 L582.1 315.2 L588.9 326.9 L592.9 323.0 L596.8 331.8 L602.6 310.3 L607.1 326.9 L612.4 324.9 L616.0 323.9 L619.5 322.0 L624.4 327.9 L628.3 321.0 L632.2 328.8 L637.1 319.1 L642.0 326.9 L645.9 320.6 L650.8 326.9 L655.7 321.0 L660.5 326.9 L664.5 323.0 L670.3 323.9 L678.1 322.0 L685.9 327.9 L689.8 323.9 L692.8 325.9 L698.6 315.2 L703.5 327.9 L711.3 324.9 L717.2 322.0 L721.1 327.9 L726.0 322.0 L730.9 326.9 L736.7 327.9 L746.5 328.8 L751.4 321.0 L756.2 332.7 L760.2 330.4 L764.1 332.7 L769.9 322.0 L777.7 314.8 L780.0 315.9 L782.5 324.2 L786.7 323.7 L795.0 325.0 L801.7 327.0 L808.4 329.2 L813.4 317.5 L817.5 327.5 L820.9 320.9 L825.0 322.5 L830.9 319.2 L835.9 328.4 L839.2 323.7 L845.1 325.9 L848.4 310.0 L853.4 311.7 L857.6 310.0 L861.7 314.2 L865.9 308.4 L870.1 312.5 L875.1 304.7 L879.3 312.5 L883.4 310.9 L888.4 314.2 L893.1 303.7 L896.8 314.2 L901.8 304.7 L906.8 314.2 L911.0 310.9 L915.1 313.4 L919.3 305.9 L925.1 308.4 L930.2 310.0 L930.2 391.6 Z" fill="#fcd98d"/><path d="M428.2 307.3 L430.7 315.2 L435.2 298.6 L439.5 310.3 L443.4 308.9 L449.3 308.9 L452.2 306.4 L457.1 310.9 L462.0 308.3 L465.9 311.2 L470.8 305.4 L474.7 309.3 L478.6 301.9 L483.5 312.8 L488.4 303.4 L492.3 310.3 L497.1 300.5 L502.0 307.3 L506.9 305.4 L514.7 301.1 L520.6 307.3 L525.5 308.3 L530.4 312.2 L532.3 309.3 L536.2 318.1 L541.1 307.0 L546.0 316.1 L549.9 311.2 L554.8 314.2 L558.7 307.0 L563.6 315.2 L567.5 310.3 L571.4 318.1 L576.2 309.3 L582.1 315.2 L588.9 326.9 L592.9 323.0 L596.8 331.8 L602.6 310.3 L607.1 326.9 L612.4 324.9 L616.0 323.9 L619.5 322.0 L624.4 327.9 L628.3 321.0 L632.2 328.8 L637.1 319.1 L642.0 326.9 L645.9 320.6 L650.8 326.9 L655.7 321.0 L660.5 326.9 L664.5 323.0 L670.3 323.9 L678.1 322.0 L685.9 327.9 L689.8 323.9 L692.8 325.9 L698.6 315.2 L703.5 327.9 L711.3 324.9 L717.2 322.0 L721.1 327.9 L726.0 322.0 L730.9 326.9 L736.7 327.9 L746.5 328.8 L751.4 321.0 L756.2 332.7 L760.2 330.4 L764.1 332.7 L769.9 322.0 L777.7 314.8 L780.0 315.9 L782.5 324.2 L786.7 323.7 L795.0 325.0 L801.7 327.0 L808.4 329.2 L813.4 317.5 L817.5 327.5 L820.9 320.9 L825.0 322.5 L830.9 319.2 L835.9 328.4 L839.2 323.7 L845.1 325.9 L848.4 310.0 L853.4 311.7 L857.6 310.0 L861.7 314.2 L865.9 308.4 L870.1 312.5 L875.1 304.7 L879.3 312.5 L883.4 310.9 L888.4 314.2 L893.1 303.7 L896.8 314.2 L901.8 304.7 L906.8 314.2 L911.0 310.9 L915.1 313.4 L919.3 305.9 L925.1 308.4 L930.2 310.0" fill="none" stroke="#f7c95e" stroke-width="1"/><path d="M428.8 391.6 L428.8 337.6 L431.7 338.6 L435.6 338.2 L438.6 340.9 L440.5 336.6 L444.4 334.3 L451.2 340.5 L511.8 340.9 L513.4 336.6 L516.7 336.6 L521.6 333.7 L525.5 332.7 L527.0 338.6 L529.4 329.8 L532.3 321.0 L535.2 336.6 L541.1 335.7 L549.9 332.7 L551.8 337.6 L551.8 391.6 Z" fill="#e7603f"/><path d="M783.3 391.6 L783.3 344.7 L787.5 341.7 L790.8 344.7 L801.7 343.7 L805.0 337.6 L808.0 344.2 L810.9 344.2 L813.4 340.9 L816.4 344.2 L818.7 344.4 L822.5 337.6 L826.4 344.4 L828.0 344.4 L830.9 337.6 L834.7 344.4 L845.1 343.1 L850.1 338.4 L854.2 339.2 L859.2 340.9 L862.6 339.2 L865.9 341.7 L870.9 338.4 L875.1 339.2 L879.3 343.4 L885.9 344.2 L891.8 341.7 L898.1 345.1 L915.1 342.1 L919.3 339.2 L925.1 342.6 L925.1 391.6 Z" fill="#e7603f"/><path d="M428.2 391.6 L428.2 340.5 L439.5 340.9 L449.3 342.5 L459.1 339.0 L478.6 340.5 L507.9 342.1 L527.4 339.6 L554.8 337.0 L580.2 342.1 L591.9 339.0 L601.6 340.9 L619.5 339.6 L643.0 337.0 L658.6 342.1 L678.1 343.5 L703.5 341.5 L727.0 343.5 L746.5 342.1 L766.0 341.5 L780.0 344.2 L796.7 343.4 L813.4 344.2 L830.1 344.2 L846.7 342.6 L863.4 343.4 L880.1 344.2 L896.8 345.9 L905.1 345.1 L918.5 340.9 L926.8 343.1 L930.2 343.4 L930.2 391.6 Z" fill="url(#gb)"/><path d="M428.2 340.5 L439.5 340.9 L449.3 342.5 L459.1 339.0 L478.6 340.5 L507.9 342.1 L527.4 339.6 L554.8 337.0 L580.2 342.1 L591.9 339.0 L601.6 340.9 L619.5 339.6 L643.0 337.0 L658.6 342.1 L678.1 343.5 L703.5 341.5 L727.0 343.5 L746.5 342.1 L766.0 341.5 L780.0 344.2 L796.7 343.4 L813.4 344.2 L830.1 344.2 L846.7 342.6 L863.4 343.4 L880.1 344.2 L896.8 345.9 L905.1 345.1 L918.5 340.9 L926.8 343.1 L930.2 343.4" fill="none" stroke="#4565d2" stroke-width="1"/><path d="M428.8 391.6 L428.8 342.5 L433.7 341.5 L439.5 344.5 L445.4 342.1 L451.2 345.4 L459.1 343.5 L466.9 342.5 L470.8 346.4 L478.6 344.5 L486.4 340.5 L492.3 345.4 L498.1 343.5 L504.0 347.4 L508.9 342.5 L513.8 344.5 L521.6 342.9 L529.4 342.1 L537.2 341.5 L547.0 340.2 L554.8 338.6 L556.7 346.4 L561.6 361.1 L566.5 356.2 L574.3 360.1 L580.2 357.1 L586.0 360.1 L589.9 353.2 L595.8 352.3 L599.7 348.4 L605.5 351.3 L611.4 349.3 L617.3 345.4 L604.9 346.4 L609.8 350.3 L616.6 345.4 L621.5 351.3 L626.4 348.4 L632.2 344.5 L637.1 350.3 L642.0 347.4 L646.9 352.3 L652.7 353.2 L658.6 348.4 L664.5 347.4 L670.3 348.4 L678.1 350.3 L684.0 348.4 L689.8 351.3 L697.7 350.3 L705.5 352.3 L711.3 353.2 L715.2 354.2 L720.1 351.9 L725.0 355.2 L729.9 349.3 L736.7 349.9 L742.6 349.3 L748.4 351.3 L756.2 350.3 L766.0 345.4 L771.9 350.3 L779.7 348.8 L787.5 347.4 L795.3 348.4 L786.7 349.2 L793.3 350.1 L800.9 347.1 L806.7 350.9 L813.4 351.7 L820.0 349.7 L826.7 350.4 L831.7 351.7 L838.4 355.1 L845.1 349.7 L851.7 353.4 L858.4 354.2 L863.4 351.7 L870.1 350.1 L875.1 353.4 L880.1 348.4 L885.1 350.9 L890.1 348.4 L895.1 352.6 L900.1 351.7 L906.8 350.1 L913.5 350.1 L920.1 352.6 L922.6 354.2 L922.6 391.6 Z" fill="#6c5cc4"/><path d="M428.2 391.6 L428.2 369.8 L433.7 367.9 L439.5 368.9 L443.4 371.8 L449.3 368.9 L455.2 370.8 L459.1 368.3 L464.9 370.2 L464.9 391.6 Z" fill="#7048ae"/><path d="M921.6 391.6 L921.6 347.1 L918.5 341.9 L926.8 344.1 L930.2 344.4 L930.2 391.6 Z" fill="url(#gl)"/><path d="M587 391.6 L587 359.2 589.9 353.2 L595.8 352.3 L599.7 348.4 L605.5 351.3 L611.4 349.3 L617.3 345.4 L604.9 346.4 L609.8 350.3 L616.6 345.4 L621.5 351.3 L626.4 348.4 L632.2 344.5 L637.1 350.3 L642.0 347.4 L646.9 352.3 L652.7 353.2 L658.6 348.4 L664.5 347.4 L670.3 348.4 L678.1 350.3 L684.0 348.4 L689.8 351.3 L697.7 350.3 L705.5 352.3 L711.3 353.2 L715.2 354.2 L720.1 351.9 L725.0 355.2 L729.9 349.3 L736.7 349.9 L742.6 349.3 L748.4 351.3 L756.2 350.3 L766.0 345.4 L771.9 350.3 L779.7 348.8 L787.5 347.4 L795.3 348.4 L786.7 349.2 L793.3 350.1 L800.9 347.1 L806.7 350.9 L813.4 351.7 L820.0 349.7 L826.7 350.4 L831.7 351.7 L838.4 355.1 L845.1 349.7 L851.7 353.4 L858.4 354.2 L863.4 351.7 L870.1 350.1 L875.1 353.4 L880.1 348.4 L885.1 350.9 L890.1 348.4 L895.1 352.6 L900.1 351.7 L906.8 350.1 L913.5 350.1 L920.1 352.6 L922.6 354.2 L922.6 391.6 Z" fill="url(#gp)"/><path d="M462.0 391.6 L462.0 390.4 L464.9 369.8 L470.8 368.9 L476.6 365.9 L482.5 367.9 L490.3 369.8 L498.1 367.9 L504.0 369.8 L511.8 366.9 L521.6 365.9 L529.4 367.9 L537.2 366.9 L547.0 368.9 L556.7 367.9 L566.5 368.9 L576.2 366.9 L588.0 365.9 L595.8 368.9 L605.5 367.9 L615.3 368.3 L605.9 368.9 L615.6 367.9 L625.4 368.9 L635.2 367.9 L643.0 365.9 L650.8 367.9 L658.6 366.9 L668.4 367.9 L678.1 366.9 L687.9 367.5 L697.7 366.9 L707.4 368.9 L717.2 367.9 L727.0 367.5 L736.7 368.3 L746.5 366.9 L756.2 367.9 L766.0 365.0 L771.9 367.9 L779.7 367.5 L787.5 366.9 L795.3 367.9 L780.0 368.4 L785.0 366.4 L791.7 366.4 L796.7 368.4 L798.0 373.4 L798.0 391.6 Z" fill="url(#gt)"/></svg></div>

<div class="card" style="left:13.8px;top:415.4px;width:148.0px;height:69.8px;border-radius:4px"><div class="ttl" style="left:5px;top:2.9px">Led 1 mode</div><div class="a" style="left:2.3px;top:16.6px;width:70.0px;height:23.7px;background:#13a0a6;border-radius:2px"><div class="a" style="left:30.0px;top:6.8px;width:10px;height:10px;line-height:10px;text-align:center;white-space:nowrap;font-size:0"><svg width="10" height="10" viewBox="0 0 10 10"><path d="M2.5 1.8 L5.5 5.2" stroke="#f4eee6" stroke-width="1.6" stroke-linecap="round"/><path d="M5.5 5.2 L7.6 7.8" stroke="#d8704a" stroke-width="1.8" stroke-linecap="round"/></svg></div></div><div class="a" style="left:76.3px;top:16.6px;width:70.0px;height:23.7px;background:#eef0f1;border-radius:2px"><div class="a" style="left:30.0px;top:6.8px;width:10px;height:10px;line-height:10px;text-align:center;white-space:nowrap;font-size:0"><svg width="10" height="10" viewBox="0 0 10 10"><path d="M5 1.5 C5 1.5 2.6 4.8 2.6 6.3 A2.4 2.4 0 0 0 7.4 6.3 C7.4 4.8 5 1.5 5 1.5 Z" fill="#3aa6e6"/><circle cx="4.2" cy="6.4" r="0.6" fill="#dff1fb"/></svg></div></div><div class="a" style="left:2.3px;top:44.2px;width:70.0px;height:23.7px;background:#eef0f1;border-radius:2px"><div class="a" style="left:30.0px;top:6.8px;width:10px;height:10px;line-height:10px;text-align:center;white-space:nowrap;font-size:0"><svg width="10" height="10" viewBox="0 0 10 10"><circle cx="5" cy="5.4" r="3.3" fill="#7a4a3a"/><circle cx="5" cy="6" r="1.6" fill="#5a4a8a"/><circle cx="2.6" cy="3" r="1" fill="#7a4a3a"/><circle cx="7.4" cy="3" r="1" fill="#7a4a3a"/></svg></div></div><div class="a" style="left:76.3px;top:44.2px;width:70.0px;height:23.7px;background:#eef0f1;border-radius:2px"><div class="a" style="left:30.0px;top:6.8px;width:10px;height:10px;line-height:10px;text-align:center;white-space:nowrap;font-size:0"><svg width="10" height="10" viewBox="0 0 10 10"><path d="M3 4 C3 2 7 2 7 4 V7 C7 8.6 3 8.6 3 7 Z" fill="none" stroke="#d3d7d8" stroke-width="0.9"/></svg></div></div></div>
<div class="card" style="left:169.2px;top:415.4px;width:148.0px;height:69.8px;border-radius:4px"><div class="ttl" style="left:5px;top:2.9px">Led 1 mode</div><div class="a" style="left:2.3px;top:16.6px;width:70.0px;height:23.7px;background:#13a0a6;border-radius:2px"><div class="a" style="left:30.0px;top:6.8px;width:10px;height:10px;line-height:10px;text-align:center;white-space:nowrap;font-size:0"><svg width="10" height="10" viewBox="0 0 10 10"><path d="M2.5 1.8 L5.5 5.2" stroke="#f4eee6" stroke-width="1.6" stroke-linecap="round"/><path d="M5.5 5.2 L7.6 7.8" stroke="#d8704a" stroke-width="1.8" stroke-linecap="round"/></svg></div></div><div class="a" style="left:76.3px;top:16.6px;width:70.0px;height:23.7px;background:#eef0f1;border-radius:2px"><div class="a" style="left:30.0px;top:6.8px;width:10px;height:10px;line-height:10px;text-align:center;white-space:nowrap;font-size:0"><svg width="10" height="10" viewBox="0 0 10 10"><path d="M5 1.5 C5 1.5 2.6 4.8 2.6 6.3 A2.4 2.4 0 0 0 7.4 6.3 C7.4 4.8 5 1.5 5 1.5 Z" fill="#3aa6e6"/><circle cx="4.2" cy="6.4" r="0.6" fill="#dff1fb"/></svg></div></div><div class="a" style="left:2.3px;top:44.2px;width:70.0px;height:23.7px;background:#eef0f1;border-radius:2px"><div class="a" style="left:30.0px;top:6.8px;width:10px;height:10px;line-height:10px;text-align:center;white-space:nowrap;font-size:0"><svg width="10" height="10" viewBox="0 0 10 10"><circle cx="5" cy="5.4" r="3.3" fill="#7a4a3a"/><circle cx="5" cy="6" r="1.6" fill="#5a4a8a"/><circle cx="2.6" cy="3" r="1" fill="#7a4a3a"/><circle cx="7.4" cy="3" r="1" fill="#7a4a3a"/></svg></div></div><div class="a" style="left:76.3px;top:44.2px;width:70.0px;height:23.7px;background:#eef0f1;border-radius:2px"><div class="a" style="left:30.0px;top:6.8px;width:10px;height:10px;line-height:10px;text-align:center;white-space:nowrap;font-size:0"><svg width="10" height="10" viewBox="0 0 10 10"><path d="M3 4 C3 2 7 2 7 4 V7 C7 8.6 3 8.6 3 7 Z" fill="none" stroke="#d3d7d8" stroke-width="0.9"/></svg></div></div></div>
<div class="card" style="left:324.2px;top:415.4px;width:148.0px;height:69.8px;border-radius:4px"><div class="ttl" style="left:5px;top:2.9px">Led 1 mode</div><div class="a" style="left:2.3px;top:16.6px;width:70.0px;height:23.7px;background:#13a0a6;border-radius:2px"><div class="a" style="left:30.0px;top:6.8px;width:10px;height:10px;line-height:10px;text-align:center;white-space:nowrap;font-size:0"><svg width="10" height="10" viewBox="0 0 10 10"><path d="M2.5 1.8 L5.5 5.2" stroke="#f4eee6" stroke-width="1.6" stroke-linecap="round"/><path d="M5.5 5.2 L7.6 7.8" stroke="#d8704a" stroke-width="1.8" stroke-linecap="round"/></svg></div></div><div class="a" style="left:76.3px;top:16.6px;width:70.0px;height:23.7px;background:#eef0f1;border-radius:2px"><div class="a" style="left:30.0px;top:6.8px;width:10px;height:10px;line-height:10px;text-align:center;white-space:nowrap;font-size:0"><svg width="10" height="10" viewBox="0 0 10 10"><path d="M5 1.5 C5 1.5 2.6 4.8 2.6 6.3 A2.4 2.4 0 0 0 7.4 6.3 C7.4 4.8 5 1.5 5 1.5 Z" fill="#3aa6e6"/><circle cx="4.2" cy="6.4" r="0.6" fill="#dff1fb"/></svg></div></div><div class="a" style="left:2.3px;top:44.2px;width:70.0px;height:23.7px;background:#eef0f1;border-radius:2px"><div class="a" style="left:30.0px;top:6.8px;width:10px;height:10px;line-height:10px;text-align:center;white-space:nowrap;font-size:0"><svg width="10" height="10" viewBox="0 0 10 10"><circle cx="5" cy="5.4" r="3.3" fill="#7a4a3a"/><circle cx="5" cy="6" r="1.6" fill="#5a4a8a"/><circle cx="2.6" cy="3" r="1" fill="#7a4a3a"/><circle cx="7.4" cy="3" r="1" fill="#7a4a3a"/></svg></div></div><div class="a" style="left:76.3px;top:44.2px;width:70.0px;height:23.7px;background:#eef0f1;border-radius:2px"><div class="a" style="left:30.0px;top:6.8px;width:10px;height:10px;line-height:10px;text-align:center;white-space:nowrap;font-size:0"><svg width="10" height="10" viewBox="0 0 10 10"><path d="M3 4 C3 2 7 2 7 4 V7 C7 8.6 3 8.6 3 7 Z" fill="none" stroke="#d3d7d8" stroke-width="0.9"/></svg></div></div></div>
<div class="card" style="left:479.1px;top:415.4px;width:148.0px;height:69.8px;border-radius:4px"><div class="ttl" style="left:5px;top:2.9px">Led 1 mode</div><div class="a" style="left:2.3px;top:16.6px;width:70.0px;height:23.7px;background:#13a0a6;border-radius:2px"><div class="a" style="left:30.0px;top:6.8px;width:10px;height:10px;line-height:10px;text-align:center;white-space:nowrap;font-size:0"><svg width="10" height="10" viewBox="0 0 10 10"><path d="M2.5 1.8 L5.5 5.2" stroke="#f4eee6" stroke-width="1.6" stroke-linecap="round"/><path d="M5.5 5.2 L7.6 7.8" stroke="#d8704a" stroke-width="1.8" stroke-linecap="round"/></svg></div></div><div class="a" style="left:76.3px;top:16.6px;width:70.0px;height:23.7px;background:#eef0f1;border-radius:2px"><div class="a" style="left:30.0px;top:6.8px;width:10px;height:10px;line-height:10px;text-align:center;white-space:nowrap;font-size:0"><svg width="10" height="10" viewBox="0 0 10 10"><path d="M5 1.5 C5 1.5 2.6 4.8 2.6 6.3 A2.4 2.4 0 0 0 7.4 6.3 C7.4 4.8 5 1.5 5 1.5 Z" fill="#3aa6e6"/><circle cx="4.2" cy="6.4" r="0.6" fill="#dff1fb"/></svg></div></div><div class="a" style="left:2.3px;top:44.2px;width:70.0px;height:23.7px;background:#eef0f1;border-radius:2px"><div class="a" style="left:30.0px;top:6.8px;width:10px;height:10px;line-height:10px;text-align:center;white-space:nowrap;font-size:0"><svg width="10" height="10" viewBox="0 0 10 10"><circle cx="5" cy="5.4" r="3.3" fill="#7a4a3a"/><circle cx="5" cy="6" r="1.6" fill="#5a4a8a"/><circle cx="2.6" cy="3" r="1" fill="#7a4a3a"/><circle cx="7.4" cy="3" r="1" fill="#7a4a3a"/></svg></div></div><div class="a" style="left:76.3px;top:44.2px;width:70.0px;height:23.7px;background:#eef0f1;border-radius:2px"><div class="a" style="left:30.0px;top:6.8px;width:10px;height:10px;line-height:10px;text-align:center;white-space:nowrap;font-size:0"><svg width="10" height="10" viewBox="0 0 10 10"><path d="M3 4 C3 2 7 2 7 4 V7 C7 8.6 3 8.6 3 7 Z" fill="none" stroke="#d3d7d8" stroke-width="0.9"/></svg></div></div></div>
<div class="card" style="left:13.9px;top:492.7px;width:69.8px;height:44.0px;border-radius:4px"><div class="ttl" style="left:5px;top:2.9px">led 5</div><div class="a" style="left:19.2px;top:21.1px;width:31.6px;height:16.0px;background:#9aa2a5;border-radius:8px"><div class="a" style="left:2.0px;top:2.0px;width:12.0px;height:12.0px;background:#fff;border-radius:50%"></div></div></div>
<div class="card" style="left:91.3px;top:492.7px;width:70.7px;height:44.0px;border-radius:4px"><div class="ttl" style="left:5px;top:2.9px">blink led 5</div><div class="a" style="left:19.6px;top:21.1px;width:31.6px;height:16.0px;background:#13a0a6;border-radius:8px"><div class="a" style="left:17.6px;top:2.0px;width:12.0px;height:12.0px;background:#fff;border-radius:50%"></div></div></div>
<div class="card" style="left:13.9px;top:544.3px;width:148.1px;height:95.2px;border-radius:4px"><div class="ttl" style="left:5px;top:2.9px">Led 1 mode</div><div class="a" style="left:2.2px;top:16.7px;width:45.4px;height:76.7px;background:#13a0a6;border-radius:2px"><div class="a" style="left:0.2px;top:34.4px;width:45px;height:10px;line-height:10px;text-align:center;white-space:nowrap;font-size:7px;font-weight:bold;color:#fff">BLINK</div></div><div class="a" style="left:51.8px;top:16.7px;width:45.2px;height:76.7px;background:#eef0f1;border-radius:2px"><div class="a" style="left:0.1px;top:34.4px;width:45px;height:10px;line-height:10px;text-align:center;white-space:nowrap;font-size:7px;color:#59646a">ON</div></div><div class="a" style="left:100.8px;top:16.7px;width:45.6px;height:76.7px;background:#eef0f1;border-radius:2px"><div class="a" style="left:0.3px;top:34.4px;width:45px;height:10px;line-height:10px;text-align:center;white-space:nowrap;font-size:7px;color:#59646a">OFF</div></div></div>
<div class="card" style="left:169.2px;top:492.7px;width:44.5px;height:146.8px;border-radius:4px"><div class="ttl" style="left:5px;top:2.9px">blink spe...</div><div class="a" style="left:2.2px;top:20.4px;width:40px;height:14px;line-height:14px;text-align:center;white-space:nowrap;font-size:12px;font-weight:bold;color:#374146">111</div><div class="a" style="left:7.2px;top:38.6px;width:30px;height:10px;line-height:10px;text-align:center;white-space:nowrap;font-size:7.3px;color:#7b8589">150</div><div class="a" style="left:20.2px;top:51.6px;width:4.0px;height:76.4px;background:#eef0f1;border-radius:2px"></div><div class="a" style="left:20.2px;top:89.4px;width:4.0px;height:38.6px;background:#13a0a6;border-radius:2px"></div><div class="a" style="left:16.5px;top:83.6px;width:11.4px;height:11.4px;background:#fff;border:2.6px solid #0e8286;border-radius:50%"></div><div class="a" style="left:12.2px;top:133.2px;width:20px;height:10px;line-height:10px;text-align:center;white-space:nowrap;font-size:7.3px;color:#7b8589">1</div></div>
<div class="card" style="left:220.7px;top:492.7px;width:147.3px;height:146.8px;border-radius:4px"><div class="ttl" style="left:5px;top:2.9px">Led color</div><div class="a" style="left:2.2px;top:16.2px;width:143.1px;height:54.3px;background:#531e6b;border-radius:2px"></div><div class="a" style="left:7.1px;top:80.5px;width:133.5px;height:4.6px;background:linear-gradient(90deg,#e8302c,#f5a623 12%,#f5e82a 22%,#47d63a 38%,#5de0e6 52%,#3d6ee8 66%,#d84ae8 86%,#e8302c);border-radius:2.3px"></div><div class="a" style="left:123.9px;top:77.2px;width:11.2px;height:11.2px;background:#fff;border:2.6px solid #531e6b;border-radius:50%"></div><div class="a" style="left:7.1px;top:94.5px;width:133.5px;height:4.6px;background:linear-gradient(90deg,#fff,#c9a8dc 40%,#7a2fa0 80%,#6d2a90);border-radius:2.3px"></div><div class="a" style="left:116.3px;top:91.2px;width:11.2px;height:11.2px;background:#fff;border:2.6px solid #531e6b;border-radius:50%"></div><div class="a" style="left:7.1px;top:108.3px;width:133.5px;height:4.6px;background:linear-gradient(90deg,#000,#2a0f38 35%,#6d2a90 70%,#7a2fa0);border-radius:2.3px"></div><div class="a" style="left:99.0px;top:105.0px;width:11.2px;height:11.2px;background:#fff;border:2.6px solid #531e6b;border-radius:50%"></div><div class="a" style="left:7.1px;top:123.2px;width:29.6px;height:11.1px;background:#f6f7f7;border-radius:2px"><div class="a" style="left:-5.2px;top:0.0px;width:40px;height:11px;line-height:11px;text-align:center;white-space:nowrap;font-size:7.3px;font-weight:bold;color:#374146">281</div></div><div class="a" style="left:6.9px;top:135.2px;width:30px;height:10px;line-height:10px;text-align:center;white-space:nowrap;font-size:6.8px;color:#a8b0b3">H</div><div class="a" style="left:39.6px;top:123.2px;width:28.9px;height:11.1px;background:#f6f7f7;border-radius:2px"><div class="a" style="left:-5.5px;top:0.0px;width:40px;height:11px;line-height:11px;text-align:center;white-space:nowrap;font-size:7.3px;font-weight:bold;color:#374146">72</div></div><div class="a" style="left:39.0px;top:135.2px;width:30px;height:10px;line-height:10px;text-align:center;white-space:nowrap;font-size:6.8px;color:#a8b0b3">S</div><div class="a" style="left:71.6px;top:123.2px;width:29.6px;height:11.1px;background:#f6f7f7;border-radius:2px"><div class="a" style="left:-5.2px;top:0.0px;width:40px;height:11px;line-height:11px;text-align:center;white-space:nowrap;font-size:7.3px;font-weight:bold;color:#374146">42</div></div><div class="a" style="left:71.4px;top:135.2px;width:30px;height:10px;line-height:10px;text-align:center;white-space:nowrap;font-size:6.8px;color:#a8b0b3">B</div><div class="a" style="left:103.9px;top:123.2px;width:36.3px;height:11.1px;background:#f6f7f7;border-radius:2px"><div class="a" style="left:-1.9px;top:0.0px;width:40px;height:11px;line-height:11px;text-align:center;white-space:nowrap;font-size:7.3px;font-weight:bold;color:#374146">531E6B</div></div><div class="a" style="left:107.0px;top:135.2px;width:30px;height:10px;line-height:10px;text-align:center;white-space:nowrap;font-size:6.8px;color:#a8b0b3">HEX</div></div>
<div class="card" style="left:375.2px;top:492.7px;width:122.9px;height:146.8px;border-radius:4px"><div class="ttl" style="left:5px;top:2.9px">Accelerometer</div><div class="a" style="left:3.3px;top:16.6px;width:116.3px;height:13.3px;background:#eef0f1;border-radius:2px"></div><div class="a" style="left:3.3px;top:18.0px;width:23.259999999999998px;height:12.6px;line-height:12.6px;text-align:center;white-space:nowrap;font-size:7.3px;color:#6e797d">15D</div><div class="a" style="left:26.6px;top:18.0px;width:23.259999999999998px;height:12.6px;line-height:12.6px;text-align:center;white-space:nowrap;font-size:7.3px;color:#6e797d">7D</div><div class="a" style="left:26.1px;top:16.6px;width:1.0px;height:13.3px;background:#f8f9f9"></div><div class="a" style="left:49.8px;top:18.0px;width:23.259999999999998px;height:12.6px;line-height:12.6px;text-align:center;white-space:nowrap;font-size:7.3px;color:#6e797d">1D</div><div class="a" style="left:49.3px;top:16.6px;width:1.0px;height:13.3px;background:#f8f9f9"></div><div class="a" style="left:73.1px;top:18.0px;width:23.259999999999998px;height:12.6px;line-height:12.6px;text-align:center;white-space:nowrap;font-size:7.3px;color:#6e797d">1H</div><div class="a" style="left:72.6px;top:16.6px;width:1.0px;height:13.3px;background:#f8f9f9"></div><div class="a" style="left:96.8px;top:17.3px;width:22.4px;height:11.8px;background:#0e8286;border-radius:2px"><div class="a" style="left:0.0px;top:0.0px;width:22.4px;height:11.6px;line-height:11.6px;text-align:center;white-space:nowrap;font-size:7.3px;font-weight:bold;color:#fff">LIVE</div></div><div class="a" style="left:3.3px;top:42.8px;width:106.9px;height:0.8px;background:#eceeef"></div><div class="a" style="left:109.4px;top:38.3px;width:14px;height:9px;line-height:9px;text-align:center;white-space:nowrap;font-size:6.6px;color:#7b8589">70</div><div class="a" style="left:3.3px;top:57.9px;width:106.9px;height:0.8px;background:#eceeef"></div><div class="a" style="left:109.4px;top:53.4px;width:14px;height:9px;line-height:9px;text-align:center;white-space:nowrap;font-size:6.6px;color:#7b8589">60</div><div class="a" style="left:3.3px;top:73.1px;width:106.9px;height:0.8px;background:#eceeef"></div><div class="a" style="left:109.4px;top:68.6px;width:14px;height:9px;line-height:9px;text-align:center;white-space:nowrap;font-size:6.6px;color:#7b8589">50</div><div class="a" style="left:3.3px;top:88.2px;width:106.9px;height:0.8px;background:#eceeef"></div><div class="a" style="left:109.4px;top:83.8px;width:14px;height:9px;line-height:9px;text-align:center;white-space:nowrap;font-size:6.6px;color:#7b8589">40</div><div class="a" style="left:3.3px;top:103.4px;width:106.9px;height:0.8px;background:#eceeef"></div><div class="a" style="left:109.4px;top:98.9px;width:14px;height:9px;line-height:9px;text-align:center;white-space:nowrap;font-size:6.6px;color:#7b8589">30</div><div class="a" style="left:3.3px;top:118.5px;width:106.9px;height:0.8px;background:#eceeef"></div><div class="a" style="left:109.4px;top:114.0px;width:14px;height:9px;line-height:9px;text-align:center;white-space:nowrap;font-size:6.6px;color:#7b8589">20</div><div class="a" style="left:3.3px;top:133.7px;width:106.9px;height:0.8px;background:#eceeef"></div><div class="a" style="left:109.4px;top:129.2px;width:14px;height:9px;line-height:9px;text-align:center;white-space:nowrap;font-size:6.6px;color:#7b8589">10</div><div class="a" style="left:-1.8px;top:135.7px;width:24px;height:9px;line-height:9px;text-align:center;white-space:nowrap;font-size:6.6px;color:#7b8589">16:10</div><div class="a" style="left:28.6px;top:135.7px;width:24px;height:9px;line-height:9px;text-align:center;white-space:nowrap;font-size:6.6px;color:#7b8589">16:20</div><div class="a" style="left:59.0px;top:135.7px;width:24px;height:9px;line-height:9px;text-align:center;white-space:nowrap;font-size:6.6px;color:#7b8589">16:30</div><div class="a" style="left:89.4px;top:135.7px;width:24px;height:9px;line-height:9px;text-align:center;white-space:nowrap;font-size:6.6px;color:#7b8589">16:40</div><svg class="a" style="left:0;top:0" width="122.9" height="146.8"><path d="M3.3 91.1 L10.9 84.6 L22.7 87.9 L33.2 84.6 L45.5 84.6 L56.2 90.7 L68.2 89.0 L78.7 84.6 L90.5 86.8 L102.8 89.0 L109.3 88.5" fill="none" stroke="#17979b" stroke-width="1.4"/><g fill="#17979b"><circle cx="10.9" cy="84.6" r="1.9"/><circle cx="22.7" cy="87.9" r="1.9"/><circle cx="33.2" cy="84.6" r="1.9"/><circle cx="45.5" cy="84.6" r="1.9"/><circle cx="56.2" cy="90.7" r="1.9"/><circle cx="68.2" cy="89.0" r="1.9"/><circle cx="78.7" cy="84.6" r="1.9"/><circle cx="90.5" cy="86.8" r="1.9"/><circle cx="102.8" cy="89.0" r="1.9"/></g></svg></div>
<div class="card" style="left:504.8px;top:492.7px;width:122.0px;height:146.8px;border-radius:4px"><div class="ttl" style="left:5px;top:2.9px">Light</div><div class="a" style="left:3.3px;top:16.6px;width:115.4px;height:13.3px;background:#eef0f1;border-radius:2px"></div><div class="a" style="left:3.3px;top:18.0px;width:23.080000000000002px;height:12.6px;line-height:12.6px;text-align:center;white-space:nowrap;font-size:7.3px;color:#6e797d">15D</div><div class="a" style="left:26.4px;top:18.0px;width:23.080000000000002px;height:12.6px;line-height:12.6px;text-align:center;white-space:nowrap;font-size:7.3px;color:#6e797d">7D</div><div class="a" style="left:25.9px;top:16.6px;width:1.0px;height:13.3px;background:#f8f9f9"></div><div class="a" style="left:49.5px;top:18.0px;width:23.080000000000002px;height:12.6px;line-height:12.6px;text-align:center;white-space:nowrap;font-size:7.3px;color:#6e797d">1D</div><div class="a" style="left:49.0px;top:16.6px;width:1.0px;height:13.3px;background:#f8f9f9"></div><div class="a" style="left:72.5px;top:18.0px;width:23.080000000000002px;height:12.6px;line-height:12.6px;text-align:center;white-space:nowrap;font-size:7.3px;color:#6e797d">1H</div><div class="a" style="left:72.0px;top:16.6px;width:1.0px;height:13.3px;background:#f8f9f9"></div><div class="a" style="left:95.9px;top:17.3px;width:22.4px;height:11.8px;background:#0e8286;border-radius:2px"><div class="a" style="left:0.0px;top:0.0px;width:22.4px;height:11.6px;line-height:11.6px;text-align:center;white-space:nowrap;font-size:7.3px;font-weight:bold;color:#fff">LIVE</div></div><div class="a" style="left:3.3px;top:42.8px;width:106.0px;height:0.8px;background:#eceeef"></div><div class="a" style="left:108.5px;top:38.3px;width:14px;height:9px;line-height:9px;text-align:center;white-space:nowrap;font-size:6.6px;color:#7b8589">70</div><div class="a" style="left:3.3px;top:57.9px;width:106.0px;height:0.8px;background:#eceeef"></div><div class="a" style="left:108.5px;top:53.4px;width:14px;height:9px;line-height:9px;text-align:center;white-space:nowrap;font-size:6.6px;color:#7b8589">60</div><div class="a" style="left:3.3px;top:73.1px;width:106.0px;height:0.8px;background:#eceeef"></div><div class="a" style="left:108.5px;top:68.6px;width:14px;height:9px;line-height:9px;text-align:center;white-space:nowrap;font-size:6.6px;color:#7b8589">50</div><div class="a" style="left:3.3px;top:88.2px;width:106.0px;height:0.8px;background:#eceeef"></div><div class="a" style="left:108.5px;top:83.8px;width:14px;height:9px;line-height:9px;text-align:center;white-space:nowrap;font-size:6.6px;color:#7b8589">40</div><div class="a" style="left:3.3px;top:103.4px;width:106.0px;height:0.8px;background:#eceeef"></div><div class="a" style="left:108.5px;top:98.9px;width:14px;height:9px;line-height:9px;text-align:center;white-space:nowrap;font-size:6.6px;color:#7b8589">30</div><div class="a" style="left:3.3px;top:118.5px;width:106.0px;height:0.8px;background:#eceeef"></div><div class="a" style="left:108.5px;top:114.0px;width:14px;height:9px;line-height:9px;text-align:center;white-space:nowrap;font-size:6.6px;color:#7b8589">20</div><div class="a" style="left:3.3px;top:133.7px;width:106.0px;height:0.8px;background:#eceeef"></div><div class="a" style="left:108.5px;top:129.2px;width:14px;height:9px;line-height:9px;text-align:center;white-space:nowrap;font-size:6.6px;color:#7b8589">10</div><div class="a" style="left:-1.8px;top:135.7px;width:24px;height:9px;line-height:9px;text-align:center;white-space:nowrap;font-size:6.6px;color:#7b8589">16:10</div><div class="a" style="left:28.6px;top:135.7px;width:24px;height:9px;line-height:9px;text-align:center;white-space:nowrap;font-size:6.6px;color:#7b8589">16:20</div><div class="a" style="left:59.0px;top:135.7px;width:24px;height:9px;line-height:9px;text-align:center;white-space:nowrap;font-size:6.6px;color:#7b8589">16:30</div><div class="a" style="left:89.4px;top:135.7px;width:24px;height:9px;line-height:9px;text-align:center;white-space:nowrap;font-size:6.6px;color:#7b8589">16:40</div><svg class="a" style="left:0;top:0" width="122.0" height="146.8"><path d="M3.3 91.1 L10.9 84.6 L22.6 87.9 L33.0 84.6 L45.1 84.6 L55.8 90.7 L67.7 89.0 L78.1 84.6 L89.9 86.8 L102.0 89.0 L108.5 88.5" fill="none" stroke="#17979b" stroke-width="1.4"/><g fill="#17979b"><circle cx="10.9" cy="84.6" r="1.9"/><circle cx="22.6" cy="87.9" r="1.9"/><circle cx="33.0" cy="84.6" r="1.9"/><circle cx="45.1" cy="84.6" r="1.9"/><circle cx="55.8" cy="90.7" r="1.9"/><circle cx="67.7" cy="89.0" r="1.9"/><circle cx="78.1" cy="84.6" r="1.9"/><circle cx="89.9" cy="86.8" r="1.9"/><circle cx="102.0" cy="89.0" r="1.9"/></g></svg></div>
<div class="card" style="left:13.5px;top:647.0px;width:121.8px;height:59.0px;border-radius:4px"><div class="ttl" style="left:5px;top:2.9px">Temperature color</div><div class="a" style="left:2.2px;top:16.6px;width:117.4px;height:40.0px;background:#00e020;border-radius:2px"></div></div>
<div class="card" style="left:142.4px;top:647.0px;width:122.8px;height:59.0px;border-radius:4px"><div class="ttl" style="left:5px;top:2.9px">Ambient color</div><div class="a" style="left:2.2px;top:16.6px;width:118.4px;height:40.0px;background:#9b7a48;border-radius:2px"></div></div>
<div class="card" style="left:272.3px;top:647.0px;width:122.4px;height:147.0px;border-radius:4px"><div class="ttl" style="left:5px;top:2.9px">Temperature</div><div class="a" style="left:3.3px;top:16.6px;width:115.8px;height:13.3px;background:#eef0f1;border-radius:2px"></div><div class="a" style="left:3.3px;top:18.0px;width:23.160000000000018px;height:12.6px;line-height:12.6px;text-align:center;white-space:nowrap;font-size:7.3px;color:#6e797d">15D</div><div class="a" style="left:26.5px;top:18.0px;width:23.160000000000018px;height:12.6px;line-height:12.6px;text-align:center;white-space:nowrap;font-size:7.3px;color:#6e797d">7D</div><div class="a" style="left:26.0px;top:16.6px;width:1.0px;height:13.3px;background:#f8f9f9"></div><div class="a" style="left:49.6px;top:18.0px;width:23.160000000000018px;height:12.6px;line-height:12.6px;text-align:center;white-space:nowrap;font-size:7.3px;color:#6e797d">1D</div><div class="a" style="left:49.1px;top:16.6px;width:1.0px;height:13.3px;background:#f8f9f9"></div><div class="a" style="left:72.8px;top:18.0px;width:23.160000000000018px;height:12.6px;line-height:12.6px;text-align:center;white-space:nowrap;font-size:7.3px;color:#6e797d">1H</div><div class="a" style="left:72.3px;top:16.6px;width:1.0px;height:13.3px;background:#f8f9f9"></div><div class="a" style="left:96.3px;top:17.3px;width:22.4px;height:11.8px;background:#0e8286;border-radius:2px"><div class="a" style="left:0.0px;top:0.0px;width:22.4px;height:11.6px;line-height:11.6px;text-align:center;white-space:nowrap;font-size:7.3px;font-weight:bold;color:#fff">LIVE</div></div><div class="a" style="left:3.3px;top:42.8px;width:106.4px;height:0.8px;background:#eceeef"></div><div class="a" style="left:108.9px;top:38.3px;width:14px;height:9px;line-height:9px;text-align:center;white-space:nowrap;font-size:6.6px;color:#7b8589">70</div><div class="a" style="left:3.3px;top:57.9px;width:106.4px;height:0.8px;background:#eceeef"></div><div class="a" style="left:108.9px;top:53.4px;width:14px;height:9px;line-height:9px;text-align:center;white-space:nowrap;font-size:6.6px;color:#7b8589">60</div><div class="a" style="left:3.3px;top:73.1px;width:106.4px;height:0.8px;background:#eceeef"></div><div class="a" style="left:108.9px;top:68.6px;width:14px;height:9px;line-height:9px;text-align:center;white-space:nowrap;font-size:6.6px;color:#7b8589">50</div><div class="a" style="left:3.3px;top:88.2px;width:106.4px;height:0.8px;background:#eceeef"></div><div class="a" style="left:108.9px;top:83.8px;width:14px;height:9px;line-height:9px;text-align:center;white-space:nowrap;font-size:6.6px;color:#7b8589">40</div><div class="a" style="left:3.3px;top:103.4px;width:106.4px;height:0.8px;background:#eceeef"></div><div class="a" style="left:108.9px;top:98.9px;width:14px;height:9px;line-height:9px;text-align:center;white-space:nowrap;font-size:6.6px;color:#7b8589">30</div><div class="a" style="left:3.3px;top:118.5px;width:106.4px;height:0.8px;background:#eceeef"></div><div class="a" style="left:108.9px;top:114.0px;width:14px;height:9px;line-height:9px;text-align:center;white-space:nowrap;font-size:6.6px;color:#7b8589">20</div><div class="a" style="left:3.3px;top:133.7px;width:106.4px;height:0.8px;background:#eceeef"></div><div class="a" style="left:108.9px;top:129.2px;width:14px;height:9px;line-height:9px;text-align:center;white-space:nowrap;font-size:6.6px;color:#7b8589">10</div><div class="a" style="left:-1.8px;top:135.7px;width:24px;height:9px;line-height:9px;text-align:center;white-space:nowrap;font-size:6.6px;color:#7b8589">16:10</div><div class="a" style="left:28.6px;top:135.7px;width:24px;height:9px;line-height:9px;text-align:center;white-space:nowrap;font-size:6.6px;color:#7b8589">16:20</div><div class="a" style="left:59.0px;top:135.7px;width:24px;height:9px;line-height:9px;text-align:center;white-space:nowrap;font-size:6.6px;color:#7b8589">16:30</div><div class="a" style="left:89.4px;top:135.7px;width:24px;height:9px;line-height:9px;text-align:center;white-space:nowrap;font-size:6.6px;color:#7b8589">16:40</div><svg class="a" style="left:0;top:0" width="122.4" height="147.0"><path d="M3.3 91.1 L10.9 84.6 L22.6 87.9 L33.1 84.6 L45.3 84.6 L56.0 90.7 L67.9 89.0 L78.4 84.6 L90.1 86.8 L102.3 89.0 L108.9 88.5" fill="none" stroke="#17979b" stroke-width="1.4"/><g fill="#17979b"><circle cx="10.9" cy="84.6" r="1.9"/><circle cx="22.6" cy="87.9" r="1.9"/><circle cx="33.1" cy="84.6" r="1.9"/><circle cx="45.3" cy="84.6" r="1.9"/><circle cx="56.0" cy="90.7" r="1.9"/><circle cx="67.9" cy="89.0" r="1.9"/><circle cx="78.4" cy="84.6" r="1.9"/><circle cx="90.1" cy="86.8" r="1.9"/><circle cx="102.3" cy="89.0" r="1.9"/></g></svg></div>
<div class="card" style="left:401.0px;top:647.0px;width:44.4px;height:59.0px;border-radius:4px"><div class="ttl" style="left:5px;top:2.9px">Humidity</div><svg class="a" style="left:10.5px;top:17.5px" width="24" height="24" viewBox="0 0 24 24">
<circle cx="12" cy="12" r="10.2" fill="none" stroke="#f1f2f2" stroke-width="2"/>
<path d="M12 2.2 A9.8 9.8 0 1 1 7.86 20.88" fill="none" stroke="#17979b" stroke-width="2.8"/>
<path d="M11.5 5.8 C11.5 5.8 7.2 10.8 7.2 13.6 A4.3 4.3 0 0 0 15.8 13.6 C15.8 10.8 11.5 5.8 11.5 5.8 Z" fill="#17979b"/>
<path d="M9.2 14 A2.3 2.3 0 0 0 11.5 16.3" fill="none" stroke="#fff" stroke-width="0.9"/></svg></div>
<div class="card" style="left:452.5px;top:647.0px;width:97.3px;height:99.0px;border-radius:4px"><div class="ttl" style="left:5px;top:2.9px">Widget name</div><div class="a" style="left:18.2px;top:36.0px;width:60px;height:14px;line-height:14px;text-align:center;white-space:nowrap;font-size:12px;font-weight:bold;color:#374146">23.3</div><div class="a" style="left:7.3px;top:58.2px;width:82.5px;height:4.4px;background:#eef0f1;border-radius:2.2px"><div class="a" style="left:0.0px;top:0.0px;width:45.7px;height:4.4px;background:#13a0a6;border-radius:2.2px"></div></div><div class="a" style="left:7.0px;top:67.6px;white-space:nowrap;font-size:7.2px;color:#7b8589">18</div><div class="a" style="left:81.0px;top:67.6px;white-space:nowrap;font-size:7.2px;color:#7b8589">26</div></div>
<div class="card" style="left:556.5px;top:647.0px;width:70.5px;height:59.0px;border-radius:4px"><div class="ttl" style="left:5px;top:2.9px">Blink speed</div><div class="a" style="left:21.3px;top:19.2px;width:27.6px;height:21.6px;background:#f8f9f9;border-radius:2px"></div><div class="a" style="left:7.2px;top:28.6px;width:7.0px;height:1.6px;background:#13a0a6"></div><div class="a" style="left:22.8px;top:23.0px;width:24px;height:12px;line-height:12px;text-align:center;white-space:nowrap;font-size:9.2px;font-weight:bold;color:#374146">111</div><div class="a" style="left:55.8px;top:28.6px;width:7.0px;height:1.6px;background:#13a0a6"></div><div class="a" style="left:58.5px;top:25.9px;width:1.6px;height:7.0px;background:#13a0a6"></div></div></div>
<div class="a" style="left:996px;top:688.4px;width:52px;height:52px;border-radius:50%;background:#f9fafa;box-shadow:0 0 2px rgba(0,0,0,0.15)"></div>
<svg class="a" style="left:1000px;top:690px" width="24" height="26" viewBox="1000 690 24 26" fill="none" stroke="#30383b" stroke-width="1.5"><path d="M1011.1 711 V701.8 H1016.6 M1020.2 701.8 H1024 M1011.1 712.6 V716"/></svg>
<div class="a" style="left:0;top:716px;width:1024px;height:3px;background:#2b2f31"></div>
</body></html>
